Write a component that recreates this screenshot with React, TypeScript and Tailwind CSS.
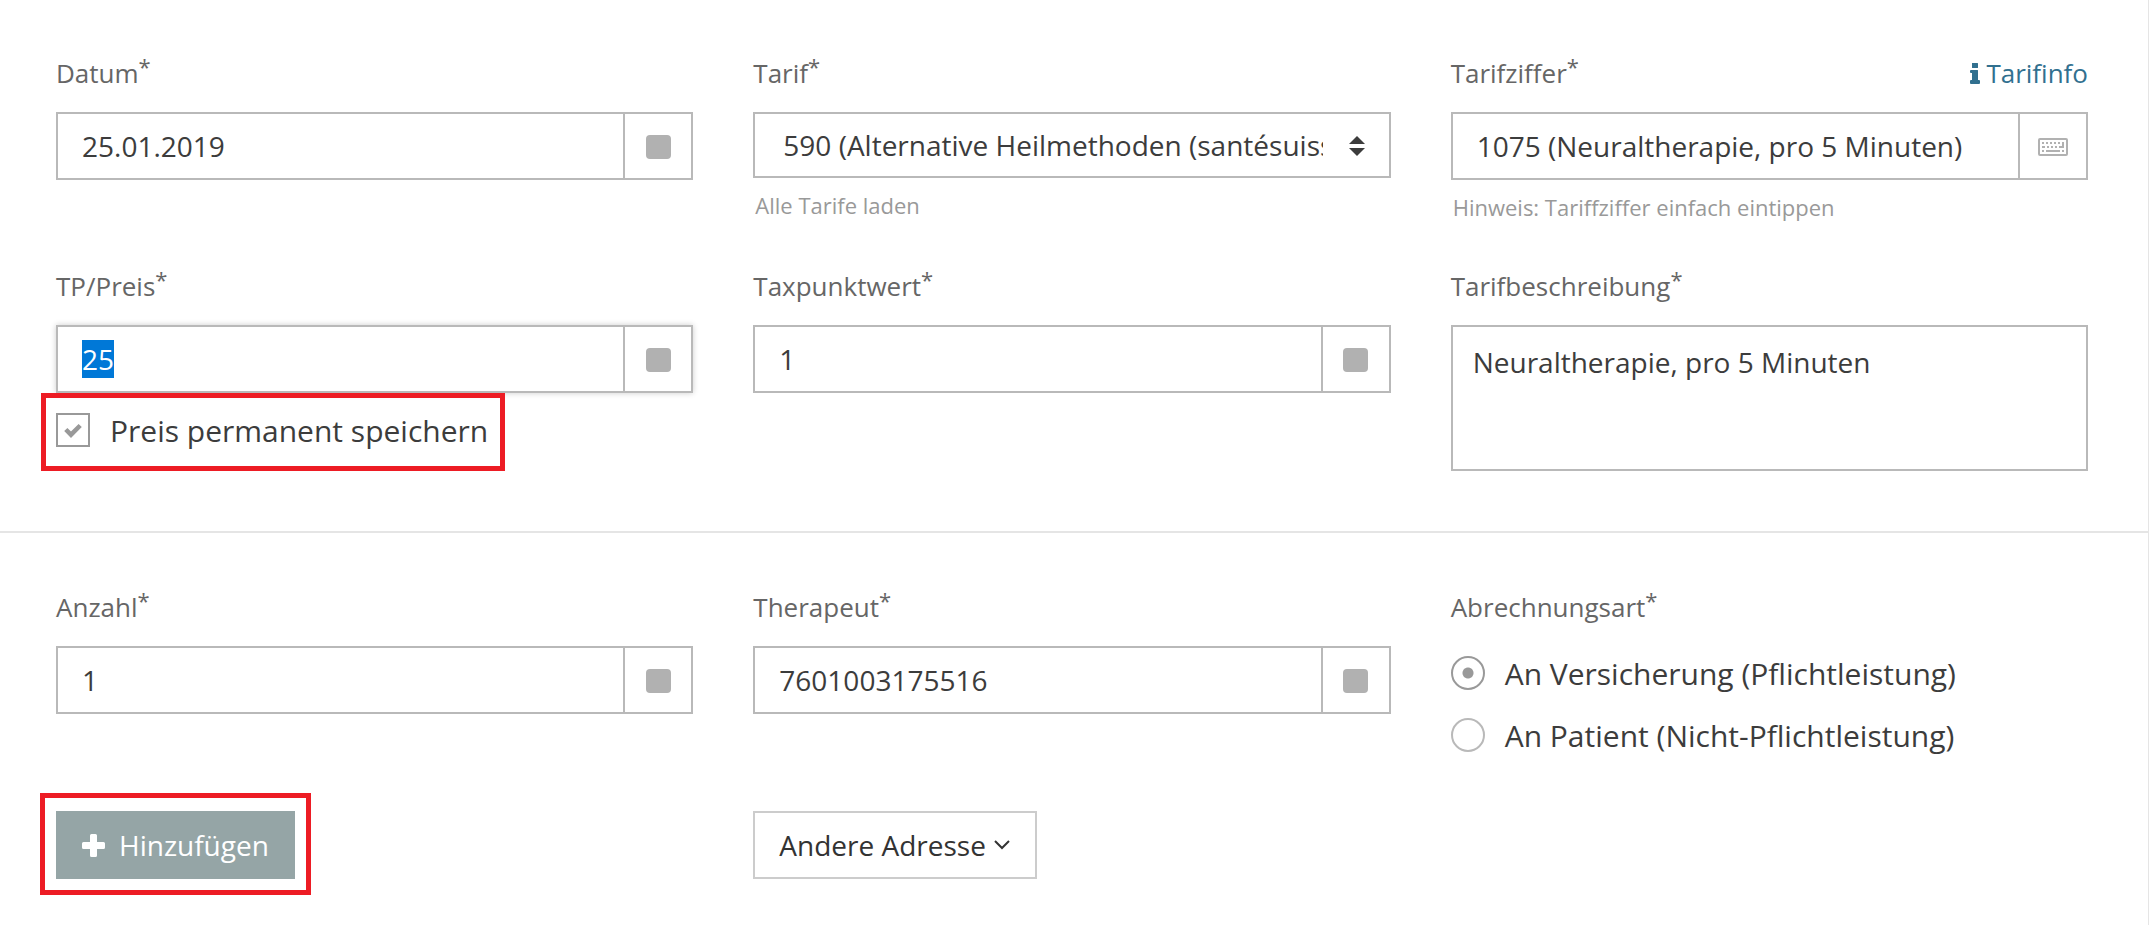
import { useEffect, useRef, type ReactNode } from 'react';

/* ─── Icons ──────────────────────────────────────────────────────────────── */

function SquareIcon() {
  return <span className="block h-6 w-[25px] rounded-[4px] bg-[#b1b1b1]" aria-hidden />;
}

function KeyboardIcon() {
  return (
    <svg width="30" height="18" viewBox="0 0 30 18" fill="none" aria-hidden>
      <rect x="1" y="1" width="28" height="16" rx="1" stroke="#b1b1b1" strokeWidth="2" />
      <path
        d="M4 5h2M8 5h2M12 5h2M16 5h2M20 5h2M4 9h3M9 9h2M13 9h2M17 9h2M4 13h2M8 13h14M24 13h2M21 9h5M25 4v6"
        stroke="#b1b1b1"
        strokeWidth="2"
      />
    </svg>
  );
}

function InfoIcon() {
  return (
    <svg width="10" height="21" viewBox="0 0 10 21" fill="currentColor" aria-hidden>
      <path d="M2 0h5.500q.5 0 .5.500v4q0 .5-.5.500H2.500q-.5 0-.5-.5zM1 7h6.500q.5 0 .5.500V17h1q1 0 1 1v2q0 1-1 1H1q-1 0-1-1v-2q0-1 1-1h1v-7H1q-1 0-1-1V8q0-1 1-1z" />
    </svg>
  );
}

function PlusIcon() {
  return (
    <svg width="23" height="23" viewBox="0 0 23 23" fill="currentColor" aria-hidden>
      <path d="M9.500 0h4q1.500 0 1.500 1.500V8h6.500Q23 8 23 9.500v4q0 1.500-1.500 1.500H15v6.500q0 1.500-1.500 1.500h-4Q8 23 8 21.500V15H1.500Q0 15 0 13.500v-4Q0 8 1.500 8H8V1.500Q8 0 9.500 0z" />
    </svg>
  );
}

function CheckIcon() {
  return (
    <svg className="pointer-events-none absolute left-2 top-2" width="18" height="18" viewBox="0 0 18 18" fill="none" aria-hidden>
      <path d="M1.800 8.500l5.200 5.200L16.200 4.500" stroke="#999" strokeWidth="4.500" />
    </svg>
  );
}

function SortIcon() {
  return (
    <svg className="pointer-events-none absolute right-[26px] top-6" width="16" height="20" viewBox="0 0 16 20" fill="#3c3c3c" aria-hidden>
      <path d="M8 0l8 8H0zM0 12h16l-8 8z" />
    </svg>
  );
}

function ChevronIcon() {
  return (
    <svg width="16" height="10" viewBox="0 0 16 10" fill="none" stroke="#333" strokeWidth="2" aria-hidden>
      <path d="M1 1l7 7 7-7" />
    </svg>
  );
}

/* ─── Form parts ─────────────────────────────────────────────────────────── */

function Label({ htmlFor, children }: { htmlFor: string; children: ReactNode }) {
  return (
    <label htmlFor={htmlFor} className="block text-[26px] leading-9 text-[#666]">
      {children}
      <sup className="relative -top-2 align-baseline text-[22px] leading-none">*</sup>
    </label>
  );
}

type FieldProps = {
  id: string;
  label: string;
  value: string;
  selected?: boolean;
  icon?: ReactNode;
  action?: ReactNode;
};

function Field({ id, label, value, selected, icon, action }: FieldProps) {
  const ref = useRef<HTMLInputElement>(null);

  useEffect(() => {
    if (selected) {
      ref.current?.focus();
      ref.current?.select();
    }
  }, [selected]);

  return (
    <div>
      <div className="mb-[21px] flex justify-between">
        <Label htmlFor={id}>{label}</Label>
        {action}
      </div>
      <div className="flex h-[68px] border-2 border-[#b9b9b9] focus-within:shadow-[0_0_6px_rgba(0,0,0,0.2)]">
        <input
          ref={ref}
          id={id}
          type="text"
          defaultValue={value}
          className="min-w-0 flex-1 px-6 text-[28px] leading-[38px] text-[#3c3c3c] outline-none selection:bg-[#0078d7] selection:text-white"
        />
        <span className="flex w-[68px] shrink-0 items-center justify-center border-l-2 border-[#b9b9b9] pt-0.5">
          {icon ?? <SquareIcon />}
        </span>
      </div>
    </div>
  );
}

function Radio({ id, label, checked }: { id: string; label: string; checked?: boolean }) {
  return (
    <div className="flex items-center gap-5">
      <input
        id={id}
        type="radio"
        name="abrechnungsart"
        defaultChecked={checked}
        className="h-[34px] w-[34px] shrink-0 appearance-none rounded-full border-2 border-[#b9b9b9] checked:border-[#999] checked:bg-[radial-gradient(circle,#999_5px,transparent_6px)]"
      />
      <label htmlFor={id} className="pt-0.5 text-[30px] leading-10 text-[#3c3c3c]">
        {label}
      </label>
    </div>
  );
}

/* ─── App ────────────────────────────────────────────────────────────────── */

export default function App() {
  return (
    <form
      className="min-h-screen border-r border-[#e5e5e5] bg-white font-['Open_Sans',sans-serif]"
      onSubmit={(e) => e.preventDefault()}
    >
      {/* Tarif */}
      <section className="grid grid-cols-3 gap-x-[60px] border-b-2 border-[#e5e5e5] pt-[55px] pr-[60px] pb-[60px] pl-14">
        <Field id="datum" label="Datum" value="25.01.2019" />

        <div className="h-[213px]">
          <div className="mb-[21px]">
            <Label htmlFor="tarif">Tarif</Label>
          </div>
          <div className="relative">
            <select
              id="tarif"
              className="h-[66px] w-full appearance-none border-2 border-[#b9b9b9] bg-white pr-[66px] pl-7 text-[28px] text-[#3c3c3c] outline-none"
            >
              <option>590 (Alternative Heilmethoden (santésuisse))</option>
            </select>
            <SortIcon />
          </div>
          <p className="mt-[11px] pl-0.5 text-[22px] leading-8 text-[#999]">Alle Tarife laden</p>
        </div>

        <div>
          <Field
            id="tarifziffer"
            label="Tarifziffer"
            value="1075 (Neuraltherapie, pro 5 Minuten)"
            icon={<KeyboardIcon />}
            action={
              <a href="#tarifinfo" className="flex items-center gap-1.5 text-[26px] leading-9 text-[#31708f]">
                <InfoIcon />
                Tarifinfo
              </a>
            }
          />
          <p className="mt-[11px] pl-0.5 text-[22px] leading-8 text-[#999]">Hinweis: Tariffziffer einfach eintippen</p>
        </div>

        <div>
          <Field id="preis" label="TP/Preis" value="25" selected />
          <div className="-ml-[15px] flex h-[78px] w-fit items-center gap-5 border-[5px] border-[#ed1c24] pr-3 pb-1 pl-2.5">
            <span className="relative block h-[34px] w-[34px]">
              <input
                id="permanent"
                type="checkbox"
                defaultChecked
                className="block h-[34px] w-[34px] appearance-none border-2 border-[#999]"
              />
              <CheckIcon />
            </span>
            <label htmlFor="permanent" className="pt-0.5 text-[30px] leading-10 text-[#3c3c3c]">
              Preis permanent speichern
            </label>
          </div>
        </div>

        <Field id="taxpunktwert" label="Taxpunktwert" value="1" />

        <div>
          <div className="mb-[21px]">
            <Label htmlFor="beschreibung">Tarifbeschreibung</Label>
          </div>
          <textarea
            id="beschreibung"
            defaultValue="Neuraltherapie, pro 5 Minuten"
            className="block h-[146px] w-full resize-none border-2 border-[#b9b9b9] px-5 py-4 text-[28px] leading-[38px] text-[#3c3c3c] outline-none"
          />
        </div>
      </section>

      {/* Abrechnung */}
      <section className="grid grid-cols-3 gap-x-[60px] pt-14 pr-[60px] pb-[30px] pl-14">
        <Field id="anzahl" label="Anzahl" value="1" />
        <Field id="therapeut" label="Therapeut" value="7601003175516" />

        <div>
          <Label htmlFor="versicherung">Abrechnungsart</Label>
          <div className="mt-[27px] flex flex-col gap-5">
            <Radio id="versicherung" label="An Versicherung (Pflichtleistung)" checked />
            <Radio id="patient" label="An Patient (Nicht-Pflichtleistung)" />
          </div>
        </div>

        <div className="-ml-4 mt-[37px] w-fit border-[5px] border-[#ed1c24] px-[11px] pt-[13px] pb-[11px]">
          <button type="submit" className="flex h-[68px] items-center gap-3.5 bg-[#95a5a6] px-[26px] text-[28px] text-white">
            <PlusIcon />
            Hinzufügen
          </button>
        </div>

        <div className="mt-[55px]">
          <button
            type="button"
            className="flex h-[68px] items-center gap-2 border-2 border-[#ccc] bg-white pr-[25px] pl-6 text-[28px] text-[#333]"
          >
            Andere Adresse
            <ChevronIcon />
          </button>
        </div>
      </section>
    </form>
  );
}
